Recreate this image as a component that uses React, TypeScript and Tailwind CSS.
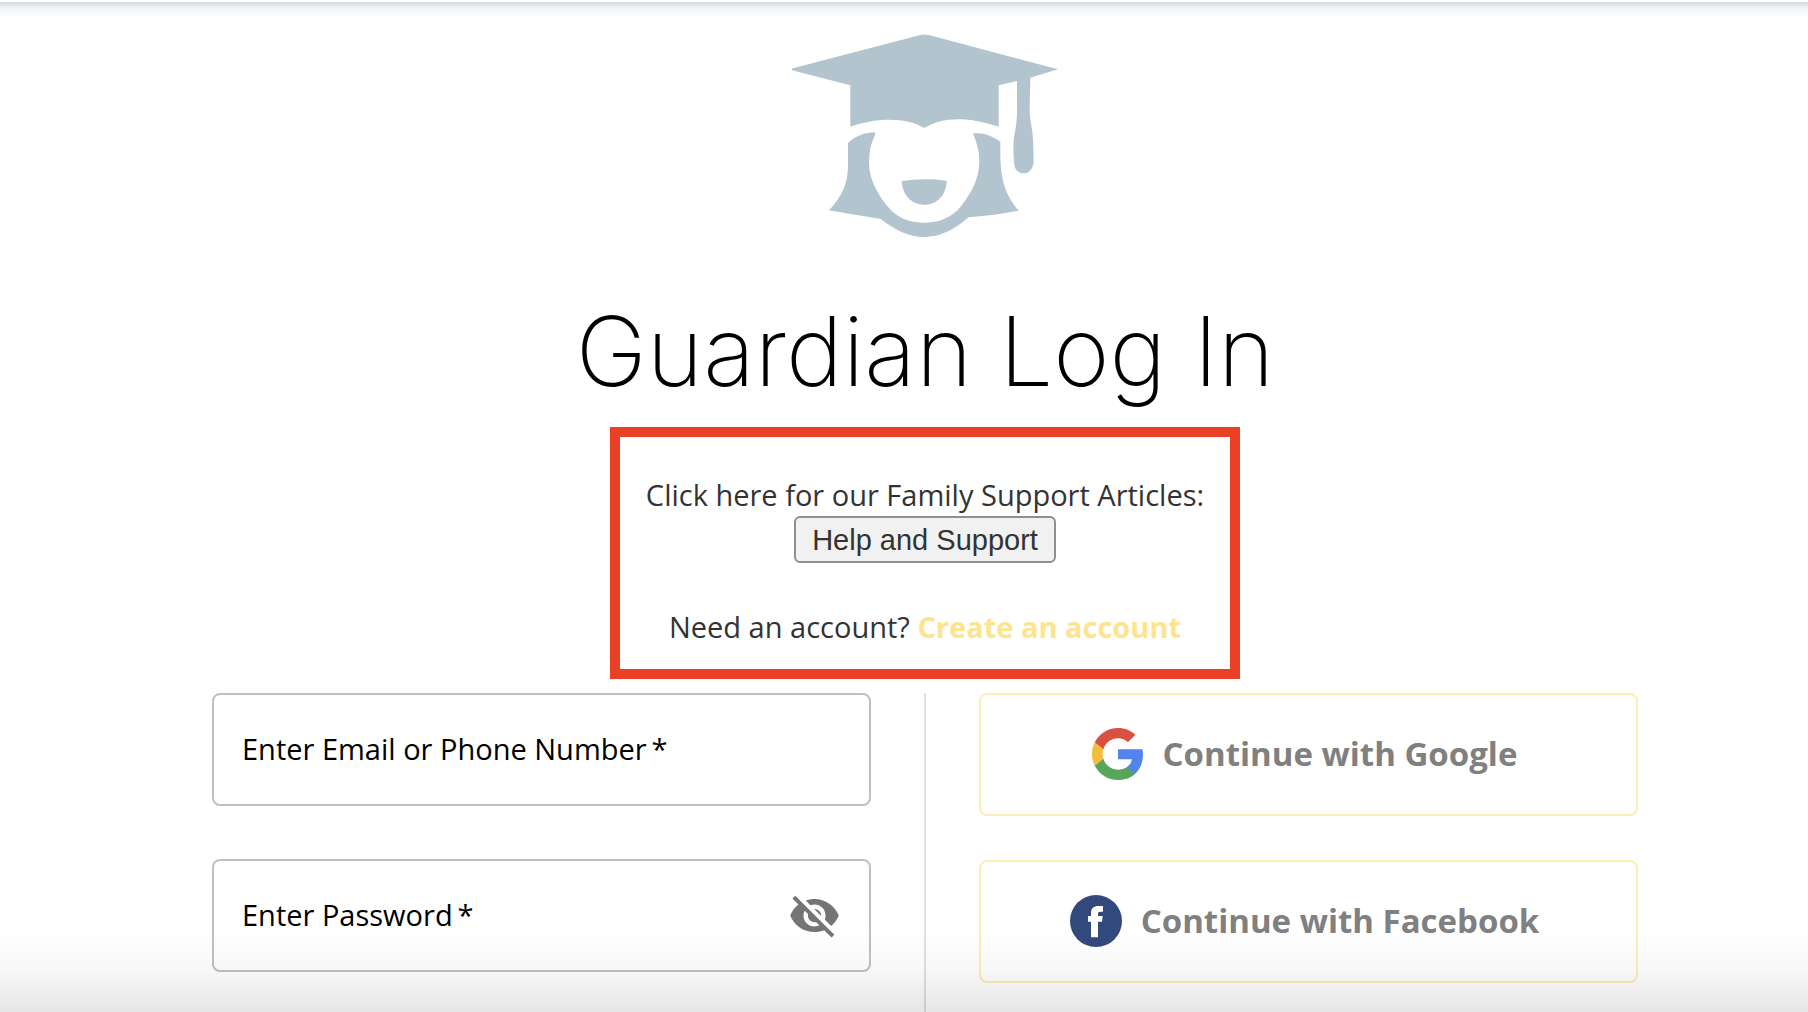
import React, { useState } from 'react';
import { MdVisibility, MdVisibilityOff } from 'react-icons/md';

function GraduateLogo() {
  return (
    <svg className="h-[203px] w-[267px]" viewBox="65 102 801 609" fill="#b2c4ce" aria-hidden="true">
      <path d="M62 206 L450 105 Q462 102 476 105 L863 208 L780 233 L778 325 C778 370 789 385 789 440 L790 485 C788 507 776 520 760 520 C744 520 733 508 732 494 C728 450 728 430 733 400 C738 375 741 350 740 320 L740 243 L685 256 L685 380 C640 366 600 358 565 358 C520 358 490 367 462 384 C435 368 405 359 355 359 C315 359 278 367 240 380 L240 256 L62 210 Z" />
      <path d="M233 429 C255 408 285 397 314 397 L314 406 C302 430 296 455 296 490 C296 535 322 590 365 634 C395 660 425 668 462 668 C500 668 530 658 560 632 C600 590 627 535 627 487 C627 455 620 430 608 400 C640 397 665 407 690 425 L690 470 C692 530 700 580 745 632 C700 641 650 648 595 652 C550 690 510 711 462 711 C415 711 375 690 331 657 C280 649 230 640 176 631 C215 590 233 550 233 495 Z" />
      <path d="M394 543 Q462 533 529 542 C528 585 500 614 462 614 C424 614 397 587 394 543 Z" />
    </svg>
  );
}

function GoogleLogo() {
  return (
    <svg className="size-[52px]" viewBox="1 1 22 22" aria-hidden="true">
      <path fill="#5383ec" d="M22.56 12.25c0-.78-.07-1.53-.2-2.25H12v4.26h5.92c-.26 1.37-1.04 2.53-2.21 3.31v2.77h3.57c2.08-1.92 3.28-4.74 3.28-8.09z" />
      <path fill="#58a55c" d="M12 23c2.97 0 5.46-.98 7.28-2.66l-3.57-2.77c-.98.66-2.23 1.06-3.71 1.06-2.86 0-5.29-1.93-6.16-4.53H2.18v2.84C3.99 20.53 7.7 23 12 23z" />
      <path fill="#f1be42" d="M5.84 14.09c-.22-.66-.35-1.36-.35-2.09s.13-1.43.35-2.09V7.07H2.18C1.43 8.55 1 10.22 1 12s.43 3.45 1.18 4.93l3.66-2.84z" />
      <path fill="#d95140" d="M12 5.38c1.62 0 3.06.56 4.21 1.64l3.15-3.15C17.45 2.09 14.97 1 12 1 7.7 1 3.99 3.47 2.18 7.07l3.66 2.84c.87-2.6 3.3-4.53 6.16-4.53z" />
    </svg>
  );
}

function FacebookLogo() {
  return (
    <svg className="size-[52px]" viewBox="300 135 156 156" aria-hidden="true">
      <circle cx="378" cy="213" r="78" fill="#33497c" />
      <path fill="#fff" d="M363 262 V215 H354 V198 H363 V190 C363 175 371 168 386 168 H399 V185 H391 C386 185 384 187 384 192 V198 H398 L396 215 H384 V262 Z" />
    </svg>
  );
}

const fieldClass =
  'block h-[113px] w-full rounded-lg border-2 border-[#c0c0c0] bg-transparent px-[30px] text-[29px] text-black outline-none';
const labelClass =
  'pointer-events-none absolute inset-x-[30px] top-[37px] text-[29px] leading-[38px] text-black';
const socialClass =
  'flex h-[123px] w-full items-center justify-center gap-[19px] rounded-lg border-2 border-[#feedb5] pr-2 pb-0.5 text-[33px] leading-[44px] font-bold text-[#808080]';

export default function App() {
  const [email, setEmail] = useState('');
  const [password, setPassword] = useState('');
  const [visible, setVisible] = useState(false);

  return (
    <div className="relative flex min-h-screen flex-col bg-white pt-0.5 font-['Open_Sans','Noto_Sans',sans-serif]">
      <div className="h-4 bg-linear-to-b from-[#cdd8db] via-[#f3f5f7] via-40% to-white" />

      <main className="flex grow flex-col pr-[170px] pl-[212px]">
        <header className="flex flex-col items-center pt-4">
          <GraduateLogo />
          <h1 className="mt-[54px] font-['Inter',sans-serif] text-[96px] leading-[120px] font-extralight text-black">
            Guardian Log In
          </h1>

          <section className="mt-4 flex h-[252px] w-[630px] flex-col items-center border-10 border-[#ea4025] pt-[39px] text-[29px] leading-[38px] text-[#333]">
            <p>Click here for our Family Support Articles:</p>
            <button
              type="button"
              className="mt-0.5 h-[47px] rounded-md border-2 border-[#8f8f8f] bg-[#f1f1f1] px-4 font-['Liberation_Sans',sans-serif]"
            >
              Help and Support
            </button>
            <p className="mt-[45px]">
              Need an account?{' '}
              <a href="#create" className="font-bold text-[#fde48f]">
                Create an account
              </a>
            </p>
          </section>
        </header>

        <div className="mt-3.5 grid grow grid-cols-[1fr_2px_1fr] gap-x-[53px]">
          <form className="flex flex-col gap-[53px]" onSubmit={(e) => e.preventDefault()}>
            <div className="relative">
              <input
                id="email"
                type="text"
                value={email}
                onChange={(e) => setEmail(e.target.value)}
                className={fieldClass}
              />
              {!email && (
                <label htmlFor="email" className={labelClass}>
                  Enter Email or Phone Number&thinsp;*
                </label>
              )}
            </div>
            <div className="relative">
              <input
                id="password"
                type={visible ? 'text' : 'password'}
                value={password}
                onChange={(e) => setPassword(e.target.value)}
                className={fieldClass}
              />
              {!password && (
                <label htmlFor="password" className={labelClass}>
                  Enter Password&thinsp;*
                </label>
              )}
              <button
                type="button"
                aria-label="Toggle password visibility"
                onClick={() => setVisible(!visible)}
                className="absolute inset-y-0 right-[30px] text-[#757575]"
              >
                {visible ? <MdVisibility size={53} /> : <MdVisibilityOff size={53} />}
              </button>
            </div>
          </form>

          <div className="bg-[#e0e0e0]" />

          <div className="flex flex-col gap-11">
            <button type="button" className={socialClass}>
              <GoogleLogo />
              Continue with Google
            </button>
            <button type="button" className={socialClass}>
              <FacebookLogo />
              Continue with Facebook
            </button>
          </div>
        </div>
      </main>

      {/* shade along the bottom edge */}
      <div className="pointer-events-none absolute inset-x-0 bottom-0 h-[84px] bg-linear-to-b from-transparent via-black/3 to-black/10" />
    </div>
  );
}
